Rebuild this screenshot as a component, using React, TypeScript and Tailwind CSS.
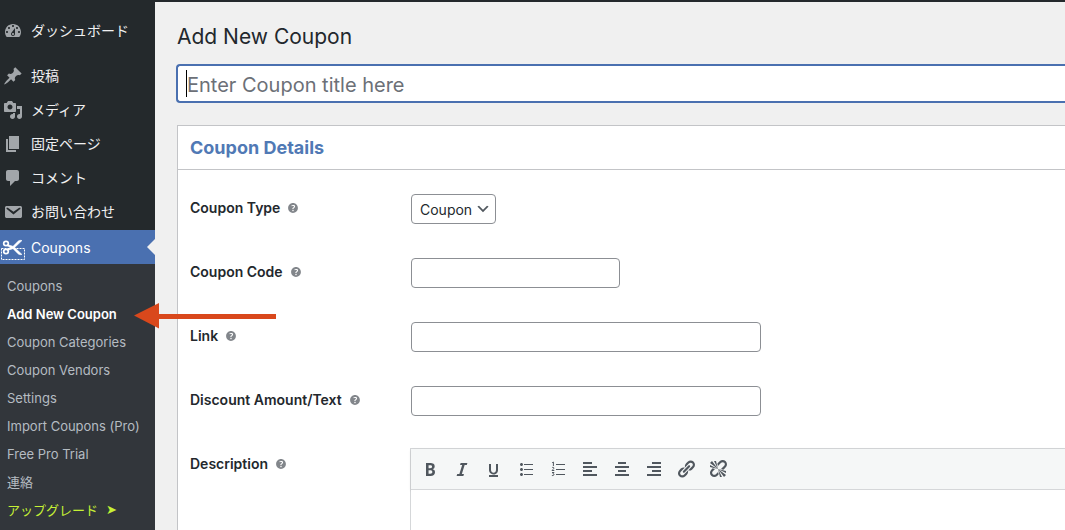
import React from "react";

function Icon({ d, className = "size-5", children }: { d?: string; className?: string; children?: React.ReactNode }) {
  return (
    <svg viewBox="0 0 20 20" className={`${className} shrink-0`} fill="currentColor" aria-hidden="true">
      {d && <path d={d} />}
      {children}
    </svg>
  );
}

const DASHBOARD =
  "M3.76 16h12.48c1.1-1.37 1.76-3.11 1.76-5 0-4.42-3.58-8-8-8s-8 3.58-8 8c0 1.89.66 3.63 1.76 5zM10 4c.55 0 1 .45 1 1s-.45 1-1 1-1-.45-1-1 .45-1 1-1zM6 6c.55 0 1 .45 1 1s-.45 1-1 1-1-.45-1-1 .45-1 1-1zm8 0c.55 0 1 .45 1 1s-.45 1-1 1-1-.45-1-1 .45-1 1-1zm-5.37 5.55L12 7v6c0 1.1-.9 2-2 2s-2-.9-2-2c0-.57.24-1.08.63-1.45zM4 10c.55 0 1 .45 1 1s-.45 1-1 1-1-.45-1-1 .45-1 1-1zm12 0c.55 0 1 .45 1 1s-.45 1-1 1-1-.45-1-1 .45-1 1-1zm-5 3c0-.55-.45-1-1-1s-1 .45-1 1 .45 1 1 1 1-.45 1-1z";
const PIN =
  "M10.44 3.02l1.82-1.82 6.36 6.35-1.83 1.82c-1.05-.68-2.48-.57-3.41.36l-.75.75c-.92.93-1.04 2.35-.35 3.41l-1.83 1.82-2.41-2.41-2.8 2.79c-.42.42-3.38 2.71-3.8 2.29s1.86-3.39 2.28-3.81l2.79-2.79L4.1 9.36l1.83-1.82c1.05.69 2.48.57 3.4-.36l.75-.75c.93-.92 1.05-2.35.36-3.41z";
const MEDIA =
  "M13 11V4c0-.55-.45-1-1-1h-1.67L9 1H5L3.67 3H2c-.55 0-1 .45-1 1v7c0 .55.45 1 1 1h10c.55 0 1-.45 1-1zM7 4.5c1.38 0 2.5 1.12 2.5 2.5S8.38 9.5 7 9.5 4.5 8.38 4.5 7 5.62 4.5 7 4.5zM14 6h5v10.5c0 1.38-1.12 2.5-2.5 2.5S14 17.88 14 16.5s1.12-2.5 2.5-2.5c.17 0 .34.02.5.05V9h-3V6zm-4 8.05V13h2v3.5c0 1.38-1.12 2.5-2.5 2.5S7 17.88 7 16.5 8.12 14 9.5 14c.17 0 .34.02.5.05z";
const PAGES = "M6 15V2h10v13H6zm-1 1h8v2H3V5h2v11z";
const COMMENT = "M5 2h9c1.1 0 2 .9 2 2v7c0 1.1-.9 2-2 2h-2l-5 5v-5H5c-1.1 0-2-.9-2-2V4c0-1.1.9-2 2-2z";
const MAIL =
  "M3.87 4h13.25C18.37 4 19 4.59 19 5.79v8.42c0 1.19-.63 1.79-1.88 1.79H3.87c-1.25 0-1.88-.6-1.88-1.79V5.79c0-1.2.63-1.79 1.88-1.79zm6.62 8.6l6.74-5.53c.24-.2.43-.66.13-1.07-.29-.41-.82-.42-1.17-.17l-5.7 3.86L4.8 5.83c-.35-.25-.88-.24-1.17.17-.3.41-.11.87.13 1.07z";
const HELP =
  "M17 10c0-3.87-3.14-7-7-7-3.87 0-7 3.13-7 7s3.13 7 7 7c3.86 0 7-3.13 7-7zm-6.3 1.48H9.14v-.43c0-.38.08-.7.24-.98s.46-.57.88-.89c.41-.29.68-.53.81-.71.14-.18.2-.39.2-.62 0-.25-.09-.44-.28-.58-.19-.13-.45-.19-.79-.19-.58 0-1.25.19-2 .57l-.64-1.28c.87-.49 1.8-.74 2.77-.74.81 0 1.45.2 1.92.58.48.39.71.91.71 1.55 0 .43-.09.8-.29 1.11-.19.32-.57.67-1.11 1.06-.38.28-.61.49-.71.63-.1.15-.15.34-.15.57v.35zm-1.47 2.74c-.18-.17-.27-.42-.27-.73 0-.33.08-.58.26-.75s.43-.25.77-.25c.32 0 .57.09.75.26s.27.42.27.74c0 .3-.09.55-.27.72-.18.18-.43.27-.75.27-.33 0-.58-.09-.76-.26z";

const MENU = [
  { label: "投稿", icon: PIN },
  { label: "メディア", icon: MEDIA },
  { label: "固定ページ", icon: PAGES },
  { label: "コメント", icon: COMMENT },
  { label: "お問い合わせ", icon: MAIL },
];

const TOOLS: { name: string; d?: string; art?: React.ReactNode }[] = [
  {
    name: "Bold",
    d: "M6 4v13h4.54c1.37 0 2.46-.33 3.26-1 .8-.66 1.2-1.58 1.2-2.77 0-.84-.17-1.51-.51-2.01s-.9-.85-1.67-1.03v-.09c.57-.1 1.02-.4 1.36-.9s.51-1.13.51-1.91c0-1.14-.39-1.98-1.17-2.5C12.75 4.26 11.5 4 9.78 4H6zm2.57 5.15V6.26h1.36c.73 0 1.27.11 1.61.32.34.22.51.58.51 1.07 0 .54-.16.92-.47 1.15s-.82.35-1.51.35h-1.5zm0 2.19h1.6c1.44 0 2.16.53 2.16 1.61 0 .6-.17 1.05-.51 1.34s-.86.43-1.57.43H8.57v-3.38z",
  },
  { name: "Italic", d: "M14.78 6h-2.13l-2.8 9h2.12l-.62 2H4.6l.62-2h2.14l2.8-9H8.03l.62-2h6.75z" },
  {
    name: "Underline",
    d: "M14 5h-2v5.71c0 1.99-1.12 2.98-2.45 2.98-1.32 0-2.55-1-2.55-2.96V5H5v5.87c0 1.91 1 4.54 4.48 4.54 3.49 0 4.52-2.58 4.52-4.5V5zm0 13v-2H5v2h9z",
  },
  {
    name: "Bulleted list",
    d: "M5.5 7C4.67 7 4 6.33 4 5.5 4 4.68 4.67 4 5.5 4 6.32 4 7 4.68 7 5.5 7 6.33 6.32 7 5.5 7zM8 5h9v1H8V5zm-2.5 7c-.83 0-1.5-.67-1.5-1.5C4 9.68 4.67 9 5.5 9c.82 0 1.5.68 1.5 1.5 0 .83-.68 1.5-1.5 1.5zM8 10h9v1H8v-1zm-2.5 7c-.83 0-1.5-.67-1.5-1.5 0-.82.67-1.5 1.5-1.5.82 0 1.5.68 1.5 1.5 0 .83-.68 1.5-1.5 1.5zM8 15h9v1H8v-1z",
  },
  {
    name: "Numbered list",
    art: (
      <>
        <path d="M8 5h9v1H8zM8 10h9v1H8zM8 15h9v1H8z" />
        <path
          d="M4.200 3.700l1.200-.7v4M4 8.800c.4-.7 2-.6 2 .3 0 .8-1.400 1.200-2 2.400h2.300M4 13.500h2l-1.100 1.300c1.700 0 1.500 2.200-1 1.700"
          fill="none"
          stroke="currentColor"
          strokeWidth="1"
        />
      </>
    ),
  },
  { name: "Align left", d: "M12 5V3H3v2h9zm5 4V7H3v2h14zm-5 4v-2H3v2h9zm5 4v-2H3v2h14z" },
  { name: "Align center", d: "M14 5V3H6v2h8zm3 4V7H3v2h14zm-3 4v-2H6v2h8zm3 4v-2H3v2h14z" },
  { name: "Align right", d: "M17 5V3H8v2h9zm0 4V7H3v2h14zm0 4v-2H8v2h9zm0 4v-2H3v2h14z" },
  {
    name: "Insert link",
    d: "M17.74 2.76c1.68 1.69 1.68 4.41 0 6.1l-1.53 1.52c-1.12 1.12-2.7 1.47-4.14 1.09l2.62-2.61.76-.77.76-.76c.84-.84.84-2.2 0-3.04-.84-.85-2.2-.85-3.04 0l-.77.76-3.38 3.38c-.37-1.44-.02-3.02 1.1-4.14l1.52-1.53c1.69-1.68 4.42-1.68 6.1 0zM8.59 13.43l5.34-5.34c.42-.42.42-1.1 0-1.52-.44-.43-1.13-.39-1.53 0l-5.33 5.34c-.42.42-.42 1.1 0 1.52.44.43 1.13.39 1.52 0zm-.76 2.29l4.14-4.15c.38 1.44.03 3.02-1.09 4.14l-1.52 1.53c-1.69 1.68-4.41 1.68-6.1 0-1.68-1.68-1.68-4.42 0-6.1l1.53-1.52c1.12-1.12 2.7-1.47 4.14-1.1l-4.14 4.15c-.85.84-.85 2.2 0 3.05.84.84 2.2.84 3.04 0z",
  },
  {
    name: "Remove link",
    d: "M17.74 2.26c1.68 1.69 1.68 4.41 0 6.1l-1.53 1.52c-.32.33-.69.58-1.08.77L13 10l1.69-1.64.76-.77.76-.76c.84-.84.84-2.2 0-3.04-.84-.85-2.2-.85-3.04 0l-.77.76-.76.76L10 7l-.65-2.14c.19-.38.44-.75.77-1.07l1.52-1.53c1.69-1.68 4.42-1.68 6.1 0zM2 4l8 6-6-8zm4-2l4 8-2-8H6zM2 6l8 4-8-2V6zm7.36 7.69L10 13l.74 2.35-1.38 1.39c-1.69 1.68-4.41 1.68-6.1 0-1.68-1.68-1.68-4.42 0-6.1l1.39-1.38L7 10l-.69.64-1.52 1.53c-.85.84-.85 2.2 0 3.04.84.85 2.2.85 3.04 0zM18 16l-8-6 6 8zm-4 2l-4-8 2 8h2zm4-4l-8-4 8 2v2z",
  },
];

const SUBMENU = [
  "Coupons",
  "Add New Coupon",
  "Coupon Categories",
  "Coupon Vendors",
  "Settings",
  "Import Coupons (Pro)",
  "Free Pro Trial",
  "連絡",
];

function MenuLink({ label, icon }: { label: string; icon: string }) {
  return (
    <a href="#" className="flex h-[34px] items-center gap-2 pl-[3px] text-sm text-[#f0f0f1]">
      <span className="text-[#a2a6aa]">
        <Icon d={icon} />
      </span>
      {label}
    </a>
  );
}

function Scissors() {
  return (
    <svg viewBox="0 0 26 24" className="h-6 w-[26px] shrink-0" fill="none" stroke="#fff" aria-hidden="true">
      <ellipse cx="6" cy="7.500" rx="2.300" ry="2.200" strokeWidth="1.700" />
      <ellipse cx="6" cy="15.500" rx="2.300" ry="2.200" strokeWidth="1.700" />
      <path d="M7.500 8.500L13 10.300 18 5.200c1.200-1 2.600-1.100 4-.6L14.700 11.500 22 18.400c-1.400.5-2.800.4-4-.6L13 12.700 7.500 14.500 6.900 13.200 10.500 11.500 6.900 9.800z" fill="#fff" strokeWidth=".5" />
      <path d="M1.500 12.500h23v11h-23z" strokeWidth="1" strokeDasharray="2 1" />
    </svg>
  );
}

function Sidebar() {
  return (
    <nav className="flex w-[155px] shrink-0 flex-col bg-[#24292c] pt-[14px]">
      <MenuLink label="ダッシュボード" icon={DASHBOARD} />
      <div className="mt-[11px] mb-px">
        {MENU.map((m) => (
          <MenuLink key={m.label} {...m} />
        ))}
      </div>
      <a href="#" className="relative flex h-[34px] items-center gap-[5px] bg-[#4a70b0] pt-px text-sm text-white">
        <Scissors />
        Coupons
        <span className="absolute top-[9px] right-0 border-y-8 border-r-8 border-y-transparent border-r-[#f0f0f0]" />
      </a>
      <div className="flex-1 bg-[#32363b] pt-2 text-[13px] leading-7 text-[#b5bcc2]">
        {SUBMENU.map((label) =>
          label === "Add New Coupon" ? (
            <a key={label} href="#" className="relative block pl-[7px] font-semibold text-white">
              {label}
              <svg viewBox="0 0 142 26" className="absolute top-[3px] left-[134px] z-10 h-[26px] w-[142px]" fill="#d9481c" aria-hidden="true">
                <path d="M0 12.500L25 0V11h117v5H25v9.500z" />
              </svg>
            </a>
          ) : (
            <a key={label} href="#" className="block pl-[7px]">
              {label}
            </a>
          ),
        )}
        <a href="#" className="flex gap-2 pl-[7px] text-[#c6f135]">
          アップグレード <span className="font-['DejaVu_Sans']">➤</span>
        </a>
      </div>
    </nav>
  );
}

function Field({ id, label, children }: { id: string; label: string; children: React.ReactNode }) {
  return (
    <div className="flex">
      <div className="flex h-7 w-[221px] shrink-0 items-center gap-[6px]">
        <label htmlFor={id} className="text-sm font-semibold text-[#23282d]">
          {label}
        </label>
        <button type="button" aria-label={`Help: ${label}`} className="text-[#82868b]">
          <Icon d={HELP} className="size-[14px]" />
        </button>
      </div>
      {children}
    </div>
  );
}

const INPUT = "h-[30px] rounded border border-[#8c8f94] bg-white px-2 text-sm";

export default function App() {
  return (
    <div className="flex min-h-screen bg-[#f0f0f0] font-['Inter','Noto_Sans_CJK_JP',sans-serif] text-[#23282d]">
      <Sidebar />
      <main className="flex min-w-0 flex-1 flex-col border-t-2 border-[#24292c] pl-[22px]">
        <h1 className="mt-5 text-[21px] leading-[30px]">Add New Coupon</h1>
        <div className="relative mt-3 -ml-px">
          <input
            type="text"
            aria-label="Coupon title"
            placeholder="Enter Coupon title here"
            className="block h-[39px] w-full rounded-l border-2 border-r-0 border-[#4a70b0] bg-white pt-[2px] pl-[9px] text-xl outline-none placeholder:text-[#6c7077]"
          />
          <span className="absolute top-[6px] left-[10px] h-[27px] w-px bg-black" />
        </div>
        <section className="mt-[22px] flex flex-1 flex-col border-t border-l border-[#c3c4c7] bg-white">
          <h2 className="border-b border-[#c3c4c7] pt-px pl-3 text-lg leading-[42px] font-bold text-[#5079b5]">Coupon Details</h2>
          <form className="flex flex-1 flex-col gap-[34px] pt-6 pl-3">
            <Field id="type" label="Coupon Type">
              <div className="relative">
                <select id="type" className={`${INPUT} w-[85px] appearance-none pt-px`}>
                  <option>Coupon</option>
                </select>
                <span className="pointer-events-none absolute top-[7px] right-[5px] text-[#50575e]">
                  <Icon d="M5 6l5 5 5-5 2 1-7 7-7-7 2-1z" className="size-4" />
                </span>
              </div>
            </Field>
            <Field id="code" label="Coupon Code">
              <input id="code" type="text" className={`${INPUT} w-[209px]`} />
            </Field>
            <Field id="link" label="Link">
              <input id="link" type="text" className={`${INPUT} w-[350px]`} />
            </Field>
            <Field id="discount" label="Discount Amount/Text">
              <input id="discount" type="text" className={`${INPUT} w-[350px]`} />
            </Field>
            <div className="flex flex-1 flex-col [&>div]:flex-1">
              <Field id="description" label="Description">
                <div className="-mt-[2px] -ml-px flex min-w-0 flex-1 flex-col border-t border-l border-[#d5d7d9]">
                  <div className="flex gap-3 border-b border-[#d5d7d9] bg-[#f5f7f7] py-[10px] pl-[9px] text-[#50575e] shadow-sm">
                    {TOOLS.map((t) => (
                      <button key={t.name} type="button" aria-label={t.name}>
                        <Icon d={t.d}>{t.art}</Icon>
                      </button>
                    ))}
                  </div>
                  <textarea id="description" className="w-full flex-1 resize-none bg-white p-2 text-sm outline-none" />
                </div>
              </Field>
            </div>
          </form>
        </section>
      </main>
    </div>
  );
}
